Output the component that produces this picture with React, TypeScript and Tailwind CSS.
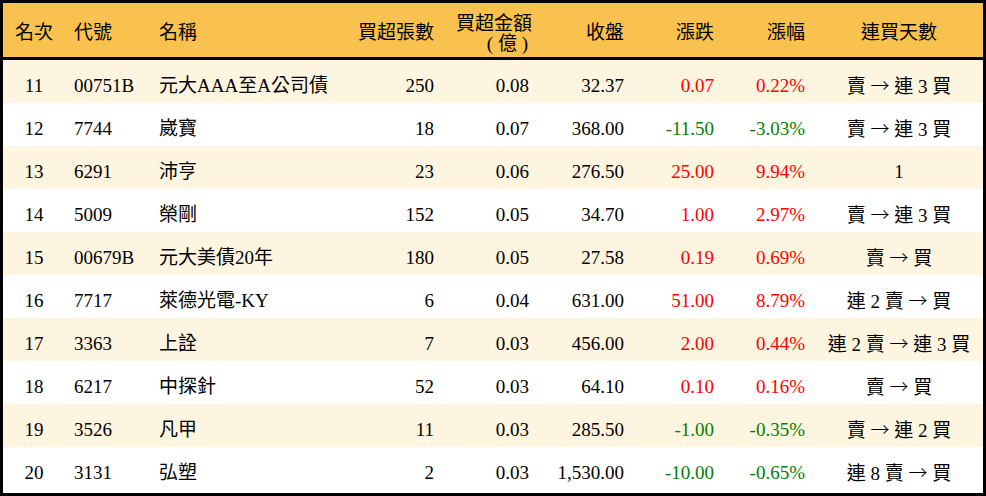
import React from "react";

type Row = {
  rank: number;
  code: string;
  name: string;
  vol: string;
  amt: string;
  close: string;
  chg: string;
  pct: string;
  streak: string;
};

const rows: Row[] = [
  { rank: 11, code: "00751B", name: "元大AAA至A公司債", vol: "250", amt: "0.08", close: "32.37", chg: "0.07", pct: "0.22%", streak: "賣 → 連 3 買" },
  { rank: 12, code: "7744", name: "崴寶", vol: "18", amt: "0.07", close: "368.00", chg: "-11.50", pct: "-3.03%", streak: "賣 → 連 3 買" },
  { rank: 13, code: "6291", name: "沛亨", vol: "23", amt: "0.06", close: "276.50", chg: "25.00", pct: "9.94%", streak: "1" },
  { rank: 14, code: "5009", name: "榮剛", vol: "152", amt: "0.05", close: "34.70", chg: "1.00", pct: "2.97%", streak: "賣 → 連 3 買" },
  { rank: 15, code: "00679B", name: "元大美債20年", vol: "180", amt: "0.05", close: "27.58", chg: "0.19", pct: "0.69%", streak: "賣 → 買" },
  { rank: 16, code: "7717", name: "萊德光電-KY", vol: "6", amt: "0.04", close: "631.00", chg: "51.00", pct: "8.79%", streak: "連 2 賣 → 買" },
  { rank: 17, code: "3363", name: "上詮", vol: "7", amt: "0.03", close: "456.00", chg: "2.00", pct: "0.44%", streak: "連 2 賣 → 連 3 買" },
  { rank: 18, code: "6217", name: "中探針", vol: "52", amt: "0.03", close: "64.10", chg: "0.10", pct: "0.16%", streak: "賣 → 買" },
  { rank: 19, code: "3526", name: "凡甲", vol: "11", amt: "0.03", close: "285.50", chg: "-1.00", pct: "-0.35%", streak: "賣 → 連 2 買" },
  { rank: 20, code: "3131", name: "弘塑", vol: "2", amt: "0.03", close: "1,530.00", chg: "-10.00", pct: "-0.65%", streak: "連 8 賣 → 買" },
];

const cols = "grid grid-cols-[62px_86px_195px_98px_95px_95px_90px_91px_1fr]";

// arrow drawn with the CJK font, which has a wider arrow than Liberation Serif
function Streak({ text }: { text: string }) {
  const parts = text.split("→");
  return (
    <>
      {parts.map((p, i) => (
        <React.Fragment key={i}>
          {i > 0 && <span className="font-['Noto_Sans_CJK_TC',sans-serif] font-light">→</span>}
          {p}
        </React.Fragment>
      ))}
    </>
  );
}

export default function App() {
  return (
    <div className="w-[986px] h-[496px] bg-white border-[3px] border-black text-[19px] text-black font-['Liberation_Serif','Noto_Sans_CJK_TC',serif] overflow-hidden">
      {/* header */}
      <div className={`${cols} h-[57px] pt-[7px] bg-[#f9c24e] border-b-[3px] border-black items-center`}>
        <div className="text-center">名次</div>
        <div className="pl-[9px]">代號</div>
        <div className="pl-[8px]">名稱</div>
        <div className="text-right pr-[10px]">買超張數</div>
        <div className="text-right pr-[7px] leading-[20px] mt-[1px]">
          買超金額
          <br />
          <span className="pr-[4px]">( 億 )</span>
        </div>
        <div className="text-right pr-[10px]">收盤</div>
        <div className="text-right pr-[10px]">漲跌</div>
        <div className="text-right pr-[10px]">漲幅</div>
        <div className="text-center">連買天數</div>
      </div>

      {rows.map((r, i) => {
        const up = !r.chg.startsWith("-");
        const color = up ? "text-[#ff0000]" : "text-[#008000]";
        return (
          <div
            key={r.rank}
            className={`${cols} h-[43px] pt-[10px] items-center ${i % 2 === 0 ? "bg-[#fef5e0]" : "bg-white"}`}
          >
            <div className="text-center">{r.rank}</div>
            <div className="pl-[9px]">{r.code}</div>
            <div className="pl-[8px] whitespace-nowrap">{r.name}</div>
            <div className="text-right pr-[10px]">{r.vol}</div>
            <div className="text-right pr-[10px]">{r.amt}</div>
            <div className="text-right pr-[10px]">{r.close}</div>
            <div className={`text-right pr-[10px] ${color}`}>{r.chg}</div>
            <div className={`text-right pr-[10px] ${color}`}>{r.pct}</div>
            <div className="text-center whitespace-nowrap">
              <Streak text={r.streak} />
            </div>
          </div>
        );
      })}
    </div>
  );
}
